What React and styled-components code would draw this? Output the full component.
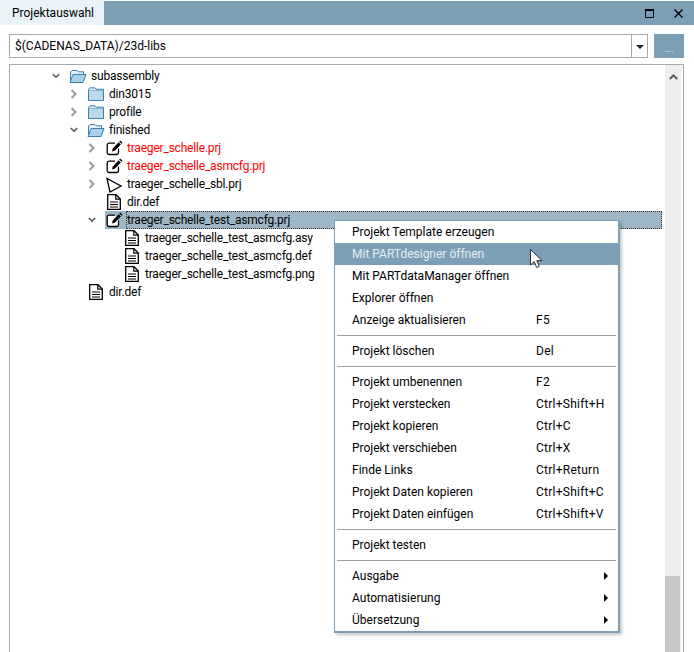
import React from "react";
import styled, { createGlobalStyle } from "styled-components";

const Global = createGlobalStyle`
  html, body { margin: 0; padding: 0; background: #fff; }
  body { font-family: Roboto, "Noto Sans", sans-serif; font-size: 12px; color: #000; }
`;

const Page = styled.div`
  position: relative;
  width: 694px;
  height: 652px;
  overflow: hidden;
  display: flex;
  flex-direction: column;
  background: #fff;
`;
const TitleBar = styled.div`
  height: 24px;
  margin-top: 1px;
  flex: none;
  display: flex;
  align-items: stretch;
  background: #7c9fb5;
`;
const Tab = styled.div`
  width: 104px;
  margin-top: -1px;
  background: #e9f3f8;
  display: flex;
  align-items: center;
  padding-left: 12px;
  box-sizing: border-box;
`;
const WinButtons = styled.div`
  margin-left: auto;
  display: flex;
  align-items: center;
  gap: 20px;
  padding-right: 11px;
`;
const PathRow = styled.div`
  display: flex;
  gap: 6px;
  padding: 9px 10px 0 9px;
  height: 24px;
  flex: none;
`;
const Combo = styled.div`
  flex: 1;
  display: flex;
  align-items: stretch;
  border: 1px solid #a9a9a9;
  box-sizing: border-box;
`;
const ComboText = styled.div`
  flex: 1;
  padding-left: 5px;
  display: flex;
  align-items: center;
`;
const ComboArrowBox = styled.div`
  width: 15px;
  border-left: 1px solid #a9a9a9;
  display: flex;
  align-items: center;
  justify-content: center;
`;
const ComboArrow = styled.div`
  width: 0;
  height: 0;
  border-left: 4px solid transparent;
  border-right: 4px solid transparent;
  border-top: 4px solid #222;
  margin-top: 1px;
`;
const MoreButton = styled.div`
  width: 30px;
  background: #7c9fb5;
  color: #e8f0f5;
  display: flex;
  align-items: center;
  justify-content: center;
  font-size: 11px;
  padding-top: 4px;
  box-sizing: border-box;
`;
const Panel = styled.div`
  flex: 1;
  margin: 6px 10px -1px 9px;
  border: 1px solid #a9a9a9;
  display: flex;
  min-height: 0;
`;
const Tree = styled.div`
  flex: 1;
  padding: 2px 3px 0 0;
`;
const Row = styled.div`
  height: 18px;
  display: flex;
  align-items: stretch;
  padding-left: ${p => 42 + p.$level * 18}px;
`;
const Chevron = styled.div`
  width: 17px;
  flex: none;
  display: flex;
  align-items: center;
  justify-content: center;
  padding-right: 9px;
  box-sizing: border-box;
`;
const RowBody = styled.div`
  flex: 1;
  display: flex;
  align-items: center;
  background: ${p => (p.$selected ? "#9db7c7" : "transparent")};
`;
const IconCell = styled.div`
  width: 18px;
  height: 18px;
  flex: none;
  display: flex;
  align-items: center;
  justify-content: center;
`;
const Label = styled.div`
  margin-left: ${p => (p.$selected ? 3 : 4)}px;
  flex: ${p => (p.$selected ? 1 : "none")};
  color: ${p => (p.$red ? "#ff0000" : "#000")};
  white-space: nowrap;
  letter-spacing: -0.2px;
  line-height: 18px;
  height: 18px;
  padding-left: ${p => (p.$selected ? 1 : 0)}px;
  outline: ${p => (p.$selected ? "1px dotted #333" : "none")};
  outline-offset: -1px;
`;
const ScrollBar = styled.div`
  width: 16px;
  margin-right: 2px;
  flex: none;
  display: flex;
  flex-direction: column;
  background: #efeded;
`;
const ScrollUp = styled.div`
  height: 24px;
  display: flex;
  align-items: center;
  justify-content: center;
`;
const ScrollGap = styled.div`
  flex: 1;
`;
const ScrollThumb = styled.div`
  height: 76px;
  width: 15px;
  background: #c8c8c8;
`;
const Menu = styled.div`
  position: absolute;
  left: 334px;
  top: 220px;
  width: 286px;
  box-sizing: border-box;
  background: #fff;
  border: 1px solid #7c9fb5;
  border-right-width: 2px;
  border-bottom-width: 2px;
  box-shadow: 2px 2px 3px rgba(0, 0, 0, 0.22);
`;
const MenuItem = styled.div`
  height: 22px;
  display: flex;
  align-items: center;
  padding-left: 17px;
  position: relative;
  background: ${p => (p.$active ? "#7c9fb5" : "transparent")};
  color: ${p => (p.$active ? "#e6eef3" : "#000")};
`;
const MenuLabel = styled.div`
  width: 184px;
  flex: none;
  white-space: nowrap;
`;
const Shortcut = styled.div`
  white-space: nowrap;
  letter-spacing: 0.25px;
`;
const SubArrow = styled.div`
  position: absolute;
  left: 269px;
  top: 7px;
  width: 0;
  height: 0;
  border-top: 4px solid transparent;
  border-bottom: 4px solid transparent;
  border-left: 4px solid #000;
`;
const Separator = styled.div`
  height: 1px;
  margin: 4px 2px 4px 2px;
  background: #a0a0a0;
`;
const Cursor = styled.svg`
  position: absolute;
  left: 530px;
  top: 249px;
`;

const ChevronRight = () => (
  <svg width="8" height="10" viewBox="0 0 8 10"><path d="M1.5 1l4 4-4 4" fill="none" stroke="#9a9a9a" strokeWidth="2" /></svg>
);
const ChevronDown = () => (
  <svg width="10" height="8" viewBox="0 0 10 8"><path d="M1 1.5l4 4 4-4" fill="none" stroke="#555" strokeWidth="2" /></svg>
);
const FolderClosed = () => (
  <svg width="16" height="14" viewBox="0 0 16 14"><path d="M.5 3.5h15v10H.5z" fill="#b9d9ee" stroke="#3f7ea6" /><path d="M.5 3.5V2.2L2 .8h5l1.2 1.4h7.3v1.3" fill="#d7e9f5" stroke="#3f7ea6" /></svg>
);
const FolderOpen = () => (
  <svg width="18" height="14" viewBox="0 0 18 14"><path d="M1.5 12V3L3 1.500h5l1.200 1.300h5.300V5" fill="#e4f0f8" stroke="#3f7ea6" /><path d="M1 13.500L4 5.500h13l-3 8z" fill="#a9d0ea" stroke="#3f7ea6" /></svg>
);
const EditDoc = () => (
  <svg width="17" height="16" viewBox="0 0 17 16">
    <path d="M12.500 8.500v4.200a2 2 0 0 1-1.800 1.800H3a2 2 0 0 1-1.800-1.800V5a2 2 0 0 1 1.800-1.800h6" fill="#fff" stroke="#000" strokeWidth="1.300" />
    <path d="M6 11.500l.8-3L12.600 2.200l2.300 2.200L9 10.500z" fill="#000" />
    <path d="M13.200 1.500l1-1 2.300 2.200-1 1z" fill="#000" />
  </svg>
);
const Play = () => (
  <svg width="16" height="18" viewBox="0 0 16 18"><path d="M1 3.500L15 11 4 17z" fill="#fff" stroke="#000" strokeWidth="1.300" /></svg>
);
const Doc = () => (
  <svg width="14" height="16" viewBox="0 0 14 16">
    <path d="M.7.700h8.300l4.300 4.300v10.300H.7z" fill="#fff" stroke="#000" strokeWidth="1.300" />
    <path d="M8.800.700v4.500h4.500" fill="none" stroke="#000" strokeWidth="1.200" />
    <path d="M3 8h8M3 10.500h8M3 13h8" stroke="#000" strokeWidth="1.200" />
  </svg>
);
const ICONS = { closed: FolderClosed, open: FolderOpen, edit: EditDoc, play: Play, doc: Doc };

const TREE = [
  { l: 0, c: "d", i: "open", t: "subassembly" },
  { l: 1, c: "r", i: "closed", t: "din3015" },
  { l: 1, c: "r", i: "closed", t: "profile" },
  { l: 1, c: "d", i: "open", t: "finished" },
  { l: 2, c: "r", i: "edit", t: "traeger_schelle.prj", red: true },
  { l: 2, c: "r", i: "edit", t: "traeger_schelle_asmcfg.prj", red: true },
  { l: 2, c: "r", i: "play", t: "traeger_schelle_sbl.prj" },
  { l: 2, i: "doc", t: "dir.def" },
  { l: 2, c: "d", i: "edit", t: "traeger_schelle_test_asmcfg.prj", sel: true },
  { l: 3, i: "doc", t: "traeger_schelle_test_asmcfg.asy" },
  { l: 3, i: "doc", t: "traeger_schelle_test_asmcfg.def" },
  { l: 3, i: "doc", t: "traeger_schelle_test_asmcfg.png" },
  { l: 1, i: "doc", t: "dir.def" },
];

const MENU = [
  { t: "Projekt Template erzeugen" },
  { t: "Mit PARTdesigner öffnen", active: true },
  { t: "Mit PARTdataManager öffnen" },
  { t: "Explorer öffnen" },
  { t: "Anzeige aktualisieren", s: "F5" },
  { sep: true },
  { t: "Projekt löschen", s: "Del" },
  { sep: true },
  { t: "Projekt umbenennen", s: "F2" },
  { t: "Projekt verstecken", s: "Ctrl+Shift+H" },
  { t: "Projekt kopieren", s: "Ctrl+C" },
  { t: "Projekt verschieben", s: "Ctrl+X" },
  { t: "Finde Links", s: "Ctrl+Return" },
  { t: "Projekt Daten kopieren", s: "Ctrl+Shift+C" },
  { t: "Projekt Daten einfügen", s: "Ctrl+Shift+V" },
  { sep: true },
  { t: "Projekt testen" },
  { sep: true },
  { t: "Ausgabe", sub: true },
  { t: "Automatisierung", sub: true },
  { t: "Übersetzung", sub: true },
];

export default function App() {
  return (
    <Page>
      <Global />
      <TitleBar>
        <Tab>Projektauswahl</Tab>
        <WinButtons>
          <svg width="9" height="9" viewBox="0 0 9 9"><path d="M.5 1h8v7.500h-8z" fill="none" stroke="#000" /><path d="M0 1h9" stroke="#000" strokeWidth="2" /></svg>
          <svg width="9" height="9" viewBox="0 0 9 9"><path d="M.5.500l8 8M8.500.500l-8 8" stroke="#000" strokeWidth="1.400" /></svg>
        </WinButtons>
      </TitleBar>
      <PathRow>
        <Combo>
          <ComboText>$(CADENAS_DATA)/23d-libs</ComboText>
          <ComboArrowBox><ComboArrow /></ComboArrowBox>
        </Combo>
        <MoreButton>...</MoreButton>
      </PathRow>
      <Panel>
        <Tree>
          {TREE.map((r, idx) => {
            const Icon = ICONS[r.i];
            return (
              <Row key={idx} $level={r.l}>
                <Chevron>
                  {r.c === "r" && <ChevronRight />}
                  {r.c === "d" && <ChevronDown />}
                </Chevron>
                <RowBody $selected={r.sel}>
                  <IconCell><Icon /></IconCell>
                  <Label $red={r.red} $selected={r.sel}>{r.t}</Label>
                </RowBody>
              </Row>
            );
          })}
        </Tree>
        <ScrollBar>
          <ScrollUp>
            <svg width="9" height="6" viewBox="0 0 9 6"><path d="M.8 5L4.500 1.300 8.200 5" fill="none" stroke="#555" strokeWidth="1.800" /></svg>
          </ScrollUp>
          <ScrollGap />
          <ScrollThumb />
        </ScrollBar>
      </Panel>
      <Menu>
        {MENU.map((m, i) =>
          m.sep ? (
            <Separator key={i} />
          ) : (
            <MenuItem key={i} $active={m.active}>
              <MenuLabel>{m.t}</MenuLabel>
              {m.s && <Shortcut>{m.s}</Shortcut>}
              {m.sub && <SubArrow />}
            </MenuItem>
          )
        )}
      </Menu>
      <Cursor width="14" height="20" viewBox="0 0 14 20">
        <path d="M.5.500v15.500l3.700-3.500 2.500 6 2.600-1.100-2.500-5.800h5.200z" fill="#fff" stroke="#333" strokeWidth="1" />
      </Cursor>
    </Page>
  );
}
